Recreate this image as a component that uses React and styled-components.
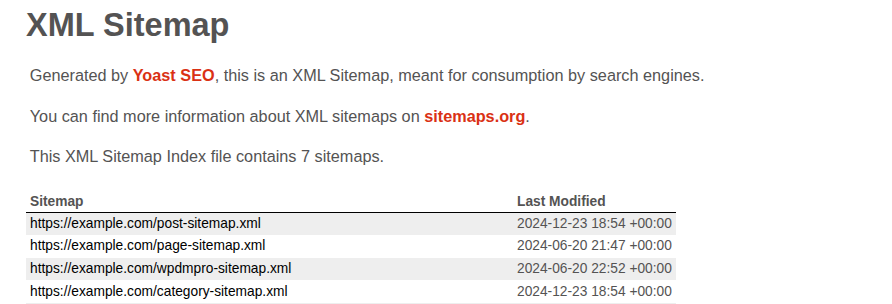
import React from "react";
import styled, { createGlobalStyle } from "styled-components";

const GlobalStyle = createGlobalStyle`
  html, body {
    margin: 0;
    padding: 0;
    background: #ffffff;
  }
  body {
    font-family: "Liberation Sans", Arial, Helvetica, sans-serif;
    font-size: 16.25px;
    color: #545353;
  }
`;

const Content = styled.div`
  padding: 7px 26px 0 26px;
`;

const Title = styled.h1`
  margin: 0 0 22px 0;
  font-size: 32.5px;
  font-weight: 700;
  line-height: 37px;
  color: #545353;
`;

const Expl = styled.p`
  margin: 0 3.75px 21px 3.75px;
  line-height: 1.2em;
  font-size: 16.25px;
`;

const RedLink = styled.a`
  color: #da3114;
  font-weight: 700;
  text-decoration: none;
`;

const Table = styled.table`
  margin-top: 26px;
  width: 650px;
  border: none;
  border-collapse: collapse;
`;

const Th = styled.th`
  text-align: left;
  font-size: 13.75px;
  font-weight: 700;
  line-height: 16px;
  padding: 1px 4px 2px 4px;
  border-bottom: 1px solid #000;
  width: ${(p) => (p.$w ? p.$w : "auto")};
  box-sizing: border-box;
  color: #545353;
`;

const Row = styled.tr`
  background: ${(p) => (p.$odd ? "#eeeeee" : "transparent")};
`;

const Td = styled.td`
  font-size: 13.75px;
  line-height: 16px;
  padding: 3.3px 4px 3.3px 4px;
  color: ${(p) => (p.$link ? "#000" : "#545353")};
  white-space: nowrap;
`;

const CellLink = styled.a`
  color: #000;
  text-decoration: none;
`;

const rows = [
  ["https://example.com/post-sitemap.xml", "2024-12-23 18:54 +00:00"],
  ["https://example.com/page-sitemap.xml", "2024-06-20 21:47 +00:00"],
  ["https://example.com/wpdmpro-sitemap.xml", "2024-06-20 22:52 +00:00"],
  ["https://example.com/category-sitemap.xml", "2024-12-23 18:54 +00:00"],
  ["https://example.com/post_tag-sitemap.xml", "2024-12-23 18:54 +00:00"],
  ["https://example.com/wpdmcategory-sitemap.xml", "2024-06-20 22:52 +00:00"],
  ["https://example.com/author-sitemap.xml", "2024-11-14 09:12 +00:00"],
];

export default function App() {
  return (
    <>
      <GlobalStyle />
      <Content>
        <Title>XML Sitemap</Title>
        <Expl>
          Generated by <RedLink href="#">Yoast SEO</RedLink>, this is an XML
          Sitemap, meant for consumption by search engines.
        </Expl>
        <Expl>
          You can find more information about XML sitemaps on{" "}
          <RedLink href="#">sitemaps.org</RedLink>.
        </Expl>
        <Expl>This XML Sitemap Index file contains 7 sitemaps.</Expl>
        <Table>
          <thead>
            <tr>
              <Th $w="487px">Sitemap</Th>
              <Th>Last Modified</Th>
            </tr>
          </thead>
          <tbody>
            {rows.map(([url, date], i) => (
              <Row key={url} $odd={i % 2 === 0}>
                <Td $link>
                  <CellLink href="#">{url}</CellLink>
                </Td>
                <Td>{date}</Td>
              </Row>
            ))}
          </tbody>
        </Table>
      </Content>
    </>
  );
}
